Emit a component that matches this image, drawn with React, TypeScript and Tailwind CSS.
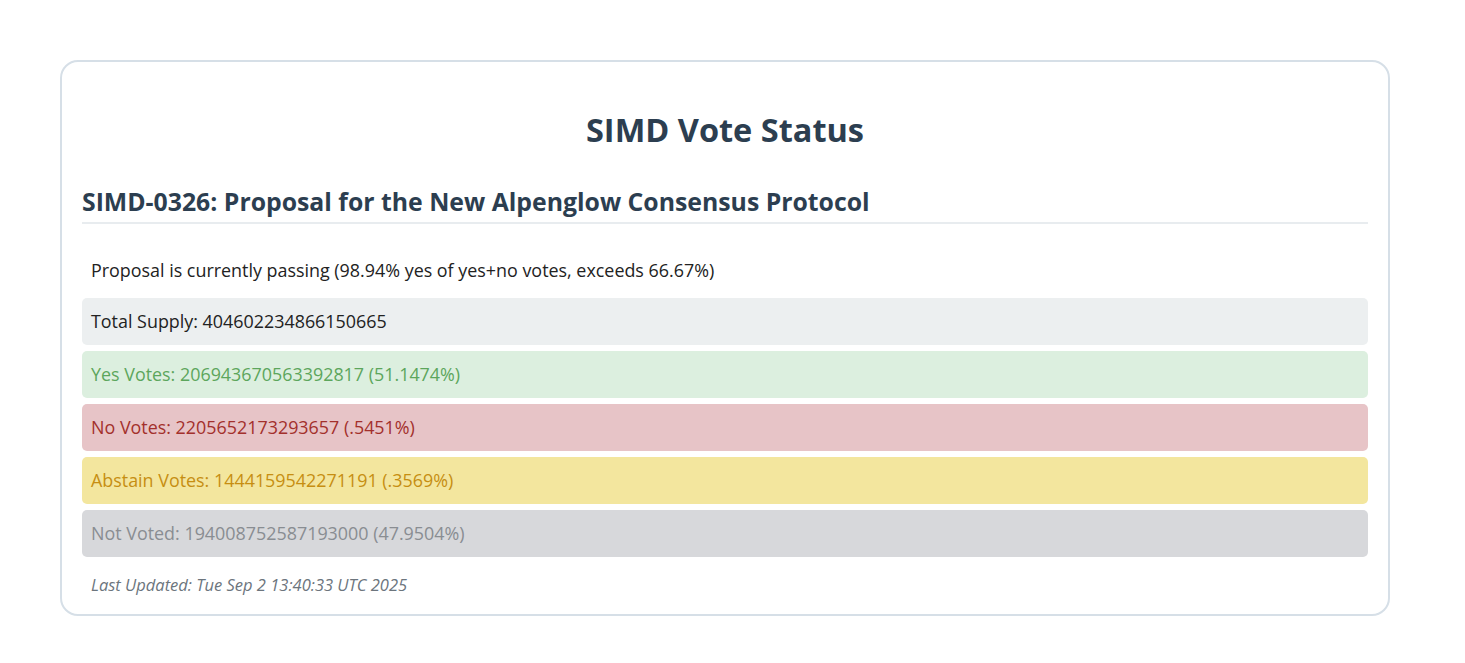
import React from 'react';

const rows = [
    { label: 'Total Supply: 404602234866150665', bg: 'bg-[#eceff0]', fg: 'text-[#222222]' },
    { label: 'Yes Votes: 206943670563392817 (51.1474%)', bg: 'bg-[#dcefdf]', fg: 'text-[#5ca65c]' },
    { label: 'No Votes: 2205652173293657 (.5451%)', bg: 'bg-[#e7c4c7]', fg: 'text-[#a3302c]' },
    { label: 'Abstain Votes: 1444159542271191 (.3569%)', bg: 'bg-[#f3e69e]', fg: 'text-[#c68e12]' },
    { label: 'Not Voted: 194008752587193000 (47.9504%)', bg: 'bg-[#d7d8db]', fg: 'text-[#898d92]' },
];

export default function App() {
    return (
        <div className="min-h-screen bg-white pt-[60px] pl-[60px]" style={{ fontFamily: '"Open Sans", "Noto Sans", sans-serif' }}>
            <div className="w-[1330px] h-[556px] border-2 border-[#d6dfe7] rounded-[18px] px-[20px] pt-[48px]">
                <h1 className="text-center text-[32.5px] leading-[40px] font-bold text-[#2c3e50]">SIMD Vote Status</h1>
                <h2 className="mt-[36px] text-[24.8px] leading-[30px] font-bold text-[#2c3e50] pb-[6px] border-b-2 border-[#e8ecef]">
                    SIMD-0326: Proposal for the New Alpenglow Consensus Protocol
                </h2>
                <p className="mt-[34px] px-[9px] text-[17.9px] leading-[24px] text-[#222222]">
                    Proposal is currently passing (98.94% yes of yes+no votes, exceeds 66.67%)
                </p>
                <div className="mt-[16px] flex flex-col gap-[6px]">
                    {rows.map((r, i) => (
                        <div key={i} className={`h-[47px] flex items-center px-[9px] rounded-[5px] text-[17.9px] ${r.bg} ${r.fg}`}>
                            {r.label}
                        </div>
                    ))}
                </div>
                <p className="mt-[17px] px-[9px] text-[16.5px] leading-[22px] italic text-[#6c757d]">
                    Last Updated: Tue Sep 2 13:40:33 UTC 2025
                </p>
            </div>
        </div>
    );
}
